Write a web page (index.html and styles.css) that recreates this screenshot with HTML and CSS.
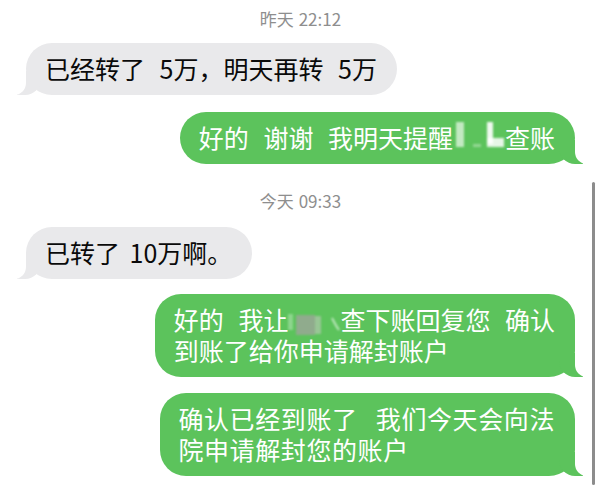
FILE: index.html
```html
<!DOCTYPE html>
<html lang="zh-CN">
<head>
<meta charset="utf-8">
<title>短信</title>
<link rel="stylesheet" href="styles.css">
</head>
<body>
<div class="chat">
  <div class="time t1">昨天 22:12</div>
  <div class="row in r1"><div class="bubble gray"><span class="line">已经转了 5万，明天再转 5万</span></div></div>
  <div class="row out r2"><div class="bubble green"><span class="line">好的 谢谢 我明天提醒<span class="redact"><svg width="52" height="31" viewBox="0 0 52 31"><rect x="3" y="0" width="8" height="25" fill="#e6f5e4" opacity="0.75"/><rect x="34" y="0" width="6" height="22" fill="#ffffff" opacity="0.9"/><rect x="34" y="16" width="17" height="9" fill="#ffffff" opacity="0.85"/><rect x="20" y="22" width="8" height="3" fill="#ffffff" opacity="0.35"/></svg></span>查账</span></div></div>
  <div class="time t2">今天 09:33</div>
  <div class="row in r3"><div class="bubble gray g2"><span class="line">已转了 10万啊。</span></div></div>
  <div class="row out r4"><div class="bubble green"><span class="line">好的 我让<span class="redact"><svg width="52" height="31" viewBox="0 0 52 31"><rect x="0" y="10" width="5" height="16" fill="#ffffff" opacity="0.3"/><rect x="8" y="11" width="19" height="20" fill="#90ab8d"/><rect x="27" y="12" width="6" height="18" fill="#a8c7a4" opacity="0.8"/><path d="M44 14 q4 8 7 12" stroke="#ffffff" stroke-width="2" fill="none" opacity="0.6"/></svg></span>查下账回复您 确认</span><span class="line">到账了给你申请解封账户</span></div></div>
  <div class="row out r5"><div class="bubble green b3"><span class="line">确认已经到账了 我们今天会向法</span><span class="line">院申请解封您的账户</span></div></div>
</div>
<div class="scrollbar"></div>
</body>
</html>
```

FILE: styles.css
```css
html, body {
  margin: 0;
  padding: 0;
  background: #ffffff;
}

body {
  width: 600px;
  height: 491px;
  overflow: hidden;
  position: relative;
  font-family: "Noto Sans CJK SC", "Noto Sans", sans-serif;
}

.chat {
  display: flex;
  flex-direction: column;
  padding: 0 25px 0 26px;
}

.time {
  text-align: center;
  font-size: 17px;
  line-height: 20px;
  height: 20px;
  color: #8e8e8e;
  word-spacing: 1px;
}

.t1 { margin-top: 9px; }
.t2 { margin-top: 27px; }

.row {
  display: flex;
}

.row.in { justify-content: flex-start; }
.row.out { justify-content: flex-end; }

.r1 { margin-top: 14px; }
.r2 { margin-top: 17px; }
.r3 { margin-top: 16px; }
.r4 { margin-top: 15px; }
.r5 { margin-top: 16px; }

.bubble {
  position: relative;
  font-size: 25px;
  padding: 10px 20px 11px 19px;
  border-radius: 26px;
  white-space: nowrap;
  word-spacing: 9px;
}

.line {
  display: block;
  height: 31px;
  line-height: 31px;
}

.gray {
  background: #e9e9eb;
  color: #0a0a0a;
}

.g2 { word-spacing: 4px; }

.b3 { word-spacing: 12px; letter-spacing: 0.6px; padding-left: 18px; }

.green {
  background: #5cc35c;
  color: #ffffff;
}

.gray::before {
  content: "";
  position: absolute;
  bottom: 0;
  left: -9px;
  width: 24px;
  height: 24px;
  background: #e9e9eb;
  border-bottom-right-radius: 16px;
}

.gray::after {
  content: "";
  position: absolute;
  bottom: 0;
  left: -30px;
  width: 30px;
  height: 24px;
  background: #ffffff;
  border-bottom-right-radius: 12px;
}

.green::before {
  content: "";
  position: absolute;
  bottom: 0;
  right: -8px;
  width: 24px;
  height: 24px;
  background: #5cc35c;
  border-bottom-left-radius: 16px;
}

.green::after {
  content: "";
  position: absolute;
  bottom: 0;
  right: -30px;
  width: 30px;
  height: 24px;
  background: #ffffff;
  border-bottom-left-radius: 12px;
}

.redact {
  display: inline-block;
  width: 52px;
  height: 31px;
  vertical-align: top;
}

.redact svg {
  display: block;
  filter: blur(1.2px);
}

.scrollbar {
  position: absolute;
  left: 592px;
  top: 182px;
  width: 3px;
  height: 303px;
  background: #8c8c8c;
  border-radius: 2px;
}
```
